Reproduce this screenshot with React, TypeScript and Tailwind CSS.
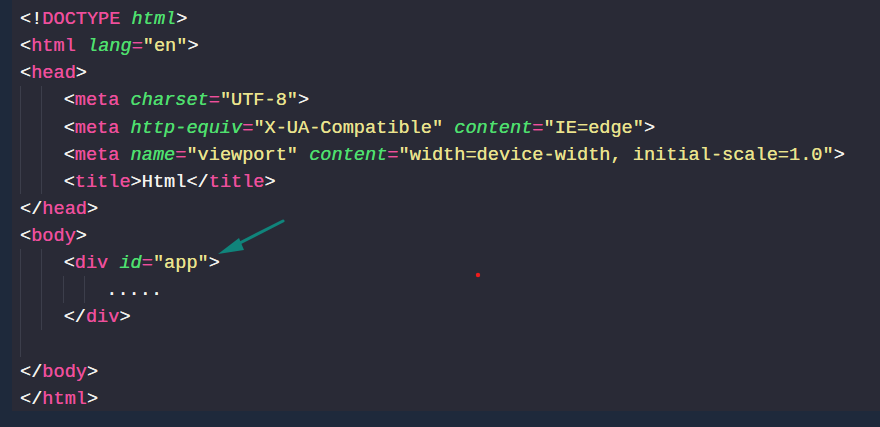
import React from "react";

type Tok = { t: string; c: string; i?: boolean };

const W = "#f2f2ee"; // brackets / plain text
const P = "#ee4f9c"; // tag names
const G = "#4fe06f"; // attribute names
const Y = "#eae38d"; // strings

const tag = (name: string): Tok[] => [
  { t: "<", c: W },
  { t: name, c: P },
];
const attr = (name: string, value: string): Tok[] => [
  { t: " ", c: W },
  { t: name, c: G, i: true },
  { t: "=", c: P },
  { t: `"${value}"`, c: Y },
];

interface Line {
  guides: number; // indent guides, one per 2 columns
  indent: number; // leading spaces
  toks: Tok[];
}

const lines: Line[] = [
  { guides: 0, indent: 0, toks: [{ t: "<!", c: W }, { t: "DOCTYPE", c: P }, { t: " ", c: W }, { t: "html", c: G, i: true }, { t: ">", c: W }] },
  { guides: 0, indent: 0, toks: [...tag("html"), ...attr("lang", "en"), { t: ">", c: W }] },
  { guides: 0, indent: 0, toks: [...tag("head"), { t: ">", c: W }] },
  { guides: 2, indent: 4, toks: [...tag("meta"), ...attr("charset", "UTF-8"), { t: ">", c: W }] },
  { guides: 2, indent: 4, toks: [...tag("meta"), ...attr("http-equiv", "X-UA-Compatible"), ...attr("content", "IE=edge"), { t: ">", c: W }] },
  { guides: 2, indent: 4, toks: [...tag("meta"), ...attr("name", "viewport"), ...attr("content", "width=device-width, initial-scale=1.0"), { t: ">", c: W }] },
  { guides: 2, indent: 4, toks: [...tag("title"), { t: ">", c: W }, { t: "Html", c: W }, { t: "</", c: W }, { t: "title", c: P }, { t: ">", c: W }] },
  { guides: 0, indent: 0, toks: [{ t: "</", c: W }, { t: "head", c: P }, { t: ">", c: W }] },
  { guides: 0, indent: 0, toks: [...tag("body"), { t: ">", c: W }] },
  { guides: 2, indent: 4, toks: [...tag("div"), ...attr("id", "app"), { t: ">", c: W }] },
  { guides: 4, indent: 8, toks: [{ t: ".....", c: W }] },
  { guides: 2, indent: 4, toks: [{ t: "</", c: W }, { t: "div", c: P }, { t: ">", c: W }] },
  { guides: 1, indent: 0, toks: [] },
  { guides: 0, indent: 0, toks: [{ t: "</", c: W }, { t: "body", c: P }, { t: ">", c: W }] },
  { guides: 0, indent: 0, toks: [{ t: "</", c: W }, { t: "html", c: P }, { t: ">", c: W }] },
];

function CodeLine({ line }: { line: Line }) {
  const guideCols = line.guides * 2;
  const pad = Math.max(0, line.indent - guideCols);
  return (
    <div className="flex h-[27.14px] items-center whitespace-pre">
      {Array.from({ length: line.guides }).map((_, g) => (
        <span key={g} className="inline-block h-full w-[2ch] border-l border-[#3c3e4b] -ml-px first:ml-0" />
      ))}
      {pad > 0 && <span>{" ".repeat(pad)}</span>}
      <span className="relative top-[2px]">
        {line.toks.map((tk, k) => (
          <span key={k} className={tk.i ? "italic" : ""} style={{ color: tk.c }}>
            {tk.t}
          </span>
        ))}
      </span>
    </div>
  );
}

export default function App() {
  return (
    <div className="flex h-[427px] w-[880px] flex-col bg-[#1e293b] pl-3 pb-4">
      <div className="relative flex-1 bg-[#292a36] pt-[4.4px] pl-[8px] font-['Liberation_Mono',monospace] text-[18.6px] text-[#f2f2ee] [text-shadow:0_0_0.4px_currentColor]">
        {lines.map((l, i) => (
          <CodeLine key={i} line={l} />
        ))}

        {/* annotation arrow */}
        <svg className="absolute left-0 top-0" width="868" height="411" viewBox="0 0 868 411">
          <line x1="271" y1="221" x2="218" y2="248" stroke="#10847b" strokeWidth="3" strokeLinecap="round" />
          <polygon points="206,254 227,238 232,250" fill="#10847b" />
          <circle cx="466" cy="275" r="2.2" fill="#ef1c1c" />
        </svg>
      </div>
    </div>
  );
}
